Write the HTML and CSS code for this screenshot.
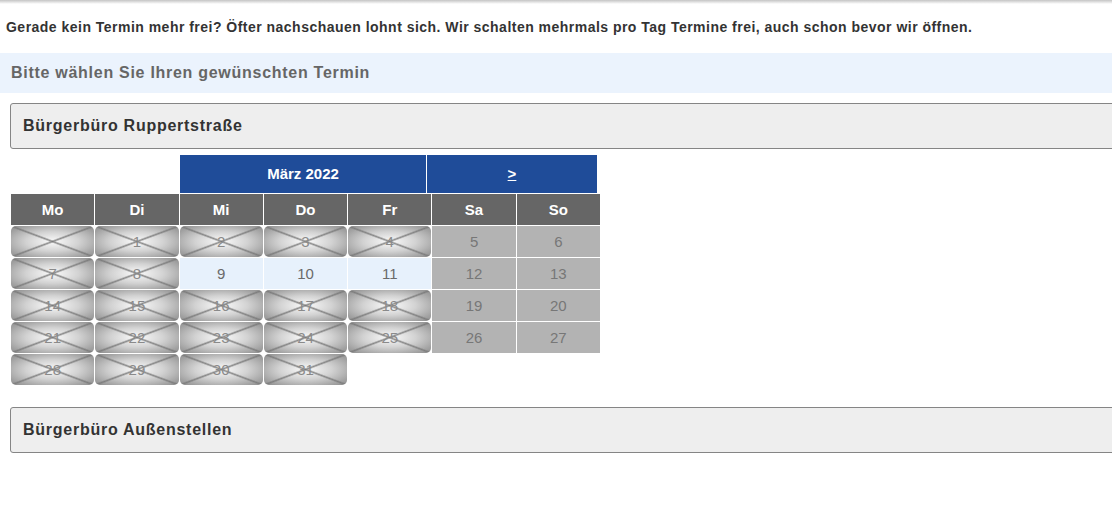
FILE: index.html
```html
<!DOCTYPE html>
<html>
<head>
  <meta charset="utf-8">
  <title>Terminvergabe</title>
  <link rel="stylesheet" href="styles.css">
</head>
<body>
  <div class="topShadow"></div>
  <p class="notice">Gerade kein Termin mehr frei? Öfter nachschauen lohnt sich. Wir schalten mehrmals pro Tag Termine frei, auch schon bevor wir öffnen.</p>
  <div class="band">Bitte wählen Sie Ihren gewünschten Termin</div>

  <div class="content">
    <div class="acc">Bürgerbüro Ruppertstraße</div>

    <div class="calHead">
      <div class="month">März 2022</div>
      <div class="next"><a href="#">&gt;</a></div>
    </div>
    <table class="cal">
      <tr>
        <th>Mo</th><th>Di</th><th>Mi</th><th>Do</th><th>Fr</th><th>Sa</th><th>So</th>
      </tr>
      <tr>
        <td class="off"></td><td class="off">1</td><td class="off">2</td><td class="off">3</td><td class="off">4</td><td class="we">5</td><td class="we">6</td>
      </tr>
      <tr>
        <td class="off">7</td><td class="off">8</td><td class="free">9</td><td class="free">10</td><td class="free">11</td><td class="we">12</td><td class="we">13</td>
      </tr>
      <tr>
        <td class="off">14</td><td class="off">15</td><td class="off">16</td><td class="off">17</td><td class="off">18</td><td class="we">19</td><td class="we">20</td>
      </tr>
      <tr>
        <td class="off">21</td><td class="off">22</td><td class="off">23</td><td class="off">24</td><td class="off">25</td><td class="we">26</td><td class="we">27</td>
      </tr>
      <tr>
        <td class="off">28</td><td class="off">29</td><td class="off">30</td><td class="off">31</td><td></td><td></td><td></td>
      </tr>
    </table>

    <div class="acc acc2">Bürgerbüro Außenstellen</div>
  </div>
</body>
</html>
```

FILE: styles.css
```css
html,body{
  overflow: hidden;
}
body{
  margin: 0;
  font-family: "Liberation Sans", Arial, sans-serif;
  color: #333;
  background: #fff;
}
.topShadow{
  height: 4px;
  background: linear-gradient(#c4c4c4, #fff);
}
.notice{
  margin: 16px 0 18px;
  padding-left: 6px;
  font-size: 14px;
  line-height: 15px;
  letter-spacing: 0.48px;
  font-weight: bold;
  white-space: nowrap;
}
.band{
  height: 40px;
  line-height: 40px;
  padding-left: 11px;
  background-color: #ebf3fd;
  color: #666;
  font-size: 16px;
  letter-spacing: 0.72px;
  font-weight: bold;
}
.content{
  padding: 10px 0 0 10px;
}
.acc{
  height: 44px;
  line-height: 44px;
  margin-right: -20px;
  padding-left: 12px;
  background-color: #eee;
  border: 1px solid #858585;
  border-radius: 3px;
  font-size: 16px;
  letter-spacing: 0.74px;
  font-weight: bold;
  color: #333;
}
.acc2{
  margin-top: 21px;
}

/* kalender */
.calHead{
  display: flex;
  gap: 1px;
  margin: 6px 0 0 170px;
  height: 38px;
}
.calHead div{
  background-color: #1f4c99;
  color: #fff;
  font-size: 15px;
  font-weight: bold;
  text-align: center;
  line-height: 38px;
}
.month{
  width: 246px;
}
.next{
  width: 170px;
}
.next a{
  color: #fff;
}
.cal{
  border-collapse: separate;
  border-spacing: 1px;
  width: 591px;
  table-layout: fixed;
}
.cal th,.cal td{
  height: 31px;
  padding: 0;
  text-align: center;
}
.cal th{
  background-color: #666;
  color: #fff;
  font-size: 15px;
}
.cal td{
  font-size: 15px;
  color: #777;
}
.cal td.free{
  background-color: #e7f1fc;
  color: #6a6a6a;
}
.cal td.we{
  background-color: #b3b3b3;
  color: #777;
}
.cal td.off{
  color: #8a8a8a;
  border-radius: 5px;
  background:
    linear-gradient(to top right, transparent calc(50% - 1.6px), rgba(120,120,120,.85) 50%, transparent calc(50% + 1.6px)),
    linear-gradient(to bottom right, transparent calc(50% - 1.6px), rgba(120,120,120,.85) 50%, transparent calc(50% + 1.6px)),
    radial-gradient(ellipse at center, #fbfbfb 0%, #d2d2d2 45%, #a4a4a4 80%, #8c8c8c 100%);
}
```
